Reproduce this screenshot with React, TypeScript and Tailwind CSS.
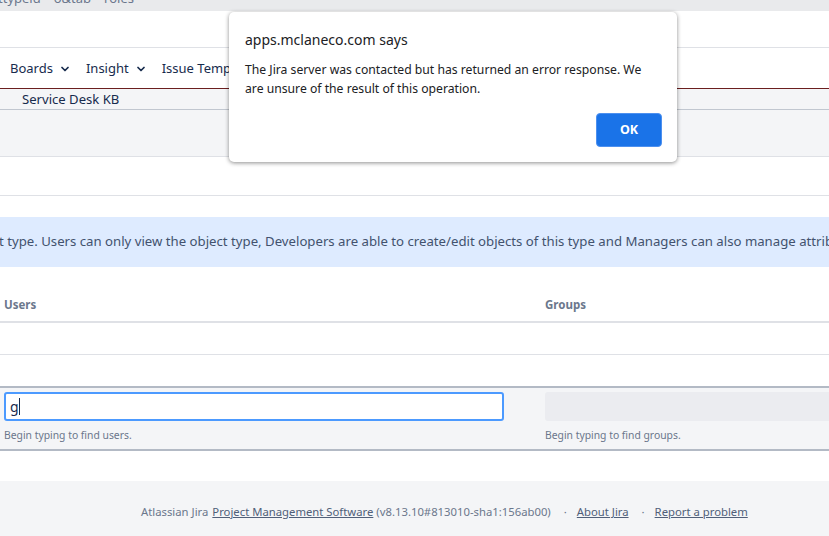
import React from "react";
import { ChevronDown } from "lucide-react";

function Nav({ label, chevron }: { label: string; chevron?: boolean }) {
  return (
    <div className="flex items-center gap-[6px]">
      <span>{label}</span>
      {chevron && <ChevronDown size={12} strokeWidth={3.5} className="text-[#172b4d]" />}
    </div>
  );
}

export default function App() {
  return (
    <div
      className="relative w-[829px] h-[536px] overflow-hidden bg-white text-[#42526e] text-[14px]"
      style={{ fontFamily: '"Noto Sans", "Open Sans", sans-serif' }}
    >
      <div className="h-[11px] bg-[#e9eaec] overflow-hidden text-[#6b778c] text-[13px] leading-[11px]">
        <div className="flex gap-[13px] -mt-[7px] -ml-[2px] whitespace-nowrap">
          <span>ttypeid</span>
          <span>o&amp;tab</span>
          <span>roles</span>
        </div>
      </div>
      <div className="h-[37px] bg-white border-b-[1px] border-[#dfe1e6]" />
      <div className="h-[41px] flex items-center gap-[15px] pl-[10px] pt-[1px] border-b border-[#6b1f1f] text-[#172b4d] text-[13px] whitespace-nowrap">
        <Nav label="Boards" chevron />
        <Nav label="Insight" chevron />
        <Nav label="Issue Templates" />
      </div>
      <div className="h-[21px] bg-[#f4f5f7] border-b border-[#c1c7d0] pl-[22px] text-[13.1px] leading-[20px] text-[#172b4d]">
        Service Desk KB
      </div>
      <div className="h-[47px] bg-[#f4f5f7] border-b border-[#dfe1e6]" />
      <div className="h-[39px] border-b border-[#dfe1e6]" />
      <div className="h-[21px]" />
      <div className="h-[50px] bg-[#deebff] flex items-center overflow-hidden whitespace-nowrap text-[13.2px]">
        <span className="-ml-[1px]">t type. Users can only view the object type, Developers are able to create/edit objects of this type and Managers can also manage attributes</span>
      </div>
      <div className="h-[56px] grid grid-cols-[541px_1fr] pl-[4px] items-end pb-[8px] border-b-2 border-[#dfe1e6] text-[11.5px] font-bold text-[#6b778c]">
        <span>Users</span>
        <span>Groups</span>
      </div>
      <div className="h-[32px] border-b border-[#dfe1e6]" />
      <div className="h-[31px]" />
      <div className="h-[65px] bg-[#f4f5f7] border-y-2 border-[#b3bac5] pl-[4px] pt-[4px] grid grid-cols-[541px_1fr]">
        <div>
          <div className="w-[500px] h-[29px] bg-white border-2 border-[#4c9aff] rounded-[3px] flex items-center pl-[4px] text-[14px] text-[#172b4d]">
            <span>g</span>
            <span className="w-px h-[17px] bg-[#172b4d]" />
          </div>
          <div className="text-[10.35px] text-[#6b778c] mt-[7px] leading-[14px]">Begin typing to find users.</div>
        </div>
        <div>
          <div className="h-[29px] bg-[#ebecf0] rounded-l-[3px]" />
          <div className="text-[10.35px] text-[#6b778c] mt-[7px] leading-[14px]">Begin typing to find groups.</div>
        </div>
      </div>
      <div className="h-[30px]" />
      <div className="h-[55px] bg-[#f4f5f7] flex items-start pt-[23px] pl-[141px] text-[11.3px] leading-[16px] text-[#6b778c] whitespace-nowrap">
        <span>Atlassian Jira</span>
        <span className="ml-[4px] underline text-[#505f79]">Project Management Software</span>
        <span className="ml-[3px]">(v8.13.10#813010-sha1:156ab00)</span>
        <span className="ml-[13px]">·</span>
        <span className="ml-[10px] underline text-[#505f79]">About Jira</span>
        <span className="ml-[13px]">·</span>
        <span className="ml-[10px] underline text-[#505f79]">Report a problem</span>
      </div>

      <div className="absolute left-[229px] top-[12px] w-[448px] h-[150px] bg-white rounded-[5px] shadow-[0_1px_4px_rgba(0,0,0,0.45)] pl-[16px] pr-[15px] pt-[18px]">
        <div className="text-[14px] leading-[20px] text-[#202124]">apps.mclaneco.com says</div>
        <div className="mt-[10px] text-[12.2px] leading-[19px] text-[#202124]">
          The Jira server was contacted but has returned an error response. We are unsure of the result of this operation.
        </div>
        <div className="absolute right-[15px] top-[101px] w-[66px] h-[34px] bg-[#1a73e8] border border-[#4d90ef] rounded-[4px] flex items-center justify-center text-white font-bold text-[12.5px]">
          OK
        </div>
      </div>
    </div>
  );
}
